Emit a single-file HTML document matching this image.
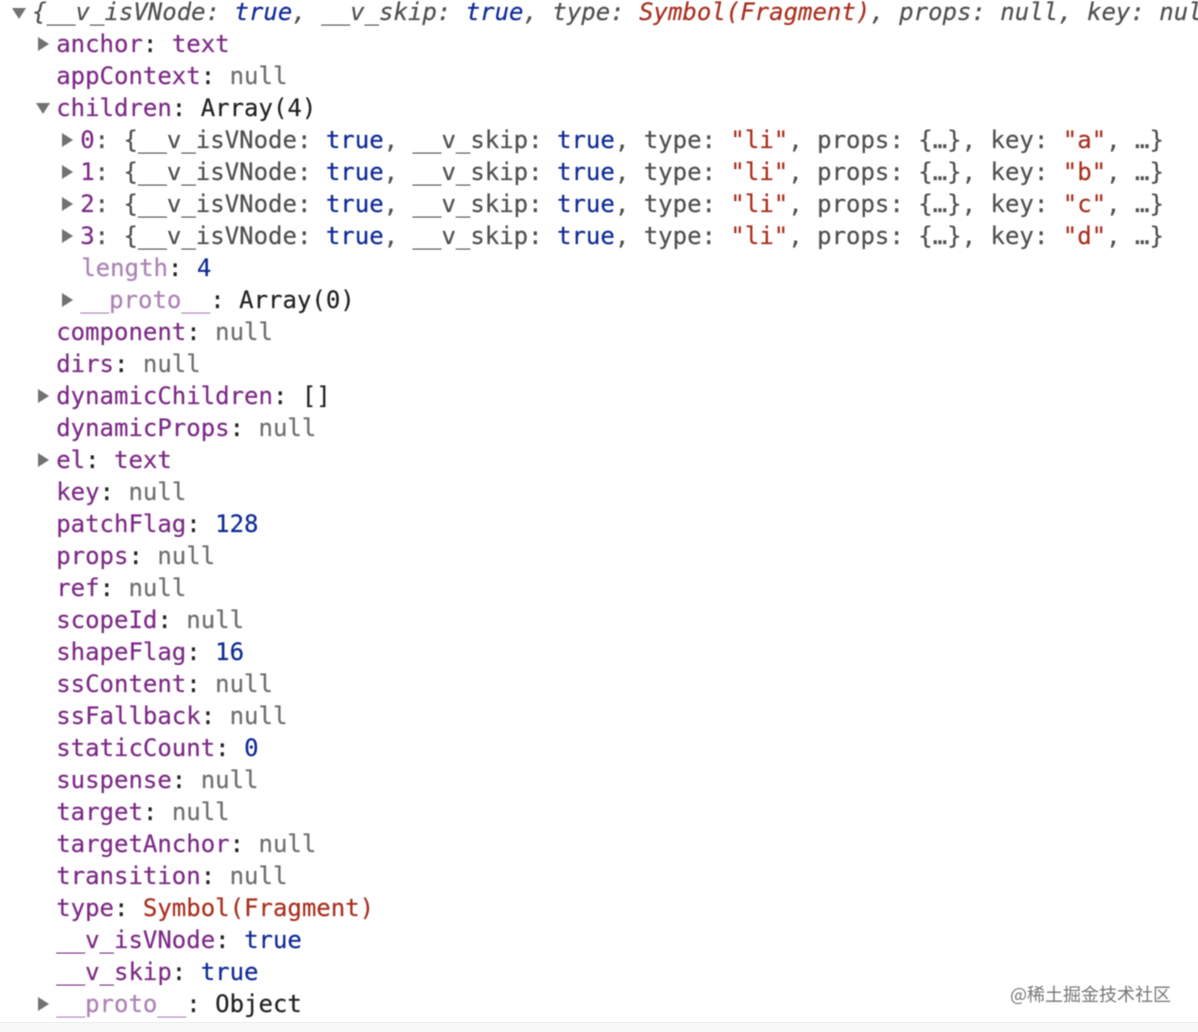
<!DOCTYPE html>
<html>
<head>
<meta charset="utf-8">
<style>
html,body{margin:0;padding:0;background:#fff;}
body{width:1198px;height:1032px;position:relative;overflow:hidden;}
#c{position:absolute;left:0;top:0;width:1198px;height:1032px;filter:blur(0.45px);}
.l{position:absolute;white-space:pre;margin-left:-0.8px;font:24px/32px "DejaVu Sans Mono","Liberation Mono",monospace;color:#222;height:32px;-webkit-text-stroke:0.2px;}
.n{color:#7c2a85}.f{color:#ab82b4}.g{color:#6f6f6f}.b{color:#0f2a96}.r{color:#a8301f}.k{color:#4f4f4f}.d{color:#222}
.i{font-style:italic}
.t{position:absolute;width:0;height:0;}
.ri{border-left:11px solid #727272;border-top:7px solid transparent;border-bottom:7px solid transparent;}
.do{border-top:11px solid #727272;border-left:7px solid transparent;border-right:7px solid transparent;}
#w{position:absolute;left:1010px;top:983px;font:18px/22px "Noto Sans CJK SC","WenQuanYi Zen Hei","Liberation Sans",sans-serif;color:#777;white-space:pre;}
#bar{position:absolute;left:0;top:1022px;width:1198px;height:10px;background:#f8f8f8;border-top:1px solid #eeeeee;box-sizing:border-box;}
</style>
</head>
<body>
<div id="c">
<div class="t do" style="left:12px;top:8px"></div>
<div class="l i k" style="left:33px;top:-4px">{__v_isVNode: <span class="b">true</span>, __v_skip: <span class="b">true</span>, type: <span class="r">Symbol(Fragment)</span>, props: null, key: null</div>

<div class="t ri" style="left:38px;top:37px"></div>
<div class="l" style="left:57px;top:28px"><span class="n">anchor</span>: <span class="n">text</span></div>
<div class="l" style="left:57px;top:60px"><span class="n">appContext</span>: <span class="g">null</span></div>
<div class="t do" style="left:36px;top:103px"></div>
<div class="l" style="left:57px;top:92px"><span class="n">children</span>: Array(4)</div>

<div class="t ri" style="left:62px;top:133px"></div>
<div class="l k" style="left:81px;top:124px"><span class="n">0</span>: {__v_isVNode: <span class="b">true</span>, __v_skip: <span class="b">true</span>, type: <span class="r">"li"</span>, props: {…}, key: <span class="r">"a"</span>, …}</div>
<div class="t ri" style="left:62px;top:165px"></div>
<div class="l k" style="left:81px;top:156px"><span class="n">1</span>: {__v_isVNode: <span class="b">true</span>, __v_skip: <span class="b">true</span>, type: <span class="r">"li"</span>, props: {…}, key: <span class="r">"b"</span>, …}</div>
<div class="t ri" style="left:62px;top:197px"></div>
<div class="l k" style="left:81px;top:188px"><span class="n">2</span>: {__v_isVNode: <span class="b">true</span>, __v_skip: <span class="b">true</span>, type: <span class="r">"li"</span>, props: {…}, key: <span class="r">"c"</span>, …}</div>
<div class="t ri" style="left:62px;top:229px"></div>
<div class="l k" style="left:81px;top:220px"><span class="n">3</span>: {__v_isVNode: <span class="b">true</span>, __v_skip: <span class="b">true</span>, type: <span class="r">"li"</span>, props: {…}, key: <span class="r">"d"</span>, …}</div>
<div class="l" style="left:82px;top:252px"><span class="f">length</span>: <span class="b">4</span></div>
<div class="t ri" style="left:62px;top:293px"></div>
<div class="l" style="left:81px;top:284px"><span class="f">__proto__</span>: Array(0)</div>

<div class="l" style="left:57px;top:316px"><span class="n">component</span>: <span class="g">null</span></div>
<div class="l" style="left:57px;top:348px"><span class="n">dirs</span>: <span class="g">null</span></div>
<div class="t ri" style="left:38px;top:389px"></div>
<div class="l" style="left:57px;top:380px"><span class="n">dynamicChildren</span>: []</div>
<div class="l" style="left:57px;top:412px"><span class="n">dynamicProps</span>: <span class="g">null</span></div>
<div class="t ri" style="left:38px;top:453px"></div>
<div class="l" style="left:57px;top:444px"><span class="n">el</span>: <span class="n">text</span></div>
<div class="l" style="left:57px;top:476px"><span class="n">key</span>: <span class="g">null</span></div>
<div class="l" style="left:57px;top:508px"><span class="n">patchFlag</span>: <span class="b">128</span></div>
<div class="l" style="left:57px;top:540px"><span class="n">props</span>: <span class="g">null</span></div>
<div class="l" style="left:57px;top:572px"><span class="n">ref</span>: <span class="g">null</span></div>
<div class="l" style="left:57px;top:604px"><span class="n">scopeId</span>: <span class="g">null</span></div>
<div class="l" style="left:57px;top:636px"><span class="n">shapeFlag</span>: <span class="b">16</span></div>
<div class="l" style="left:57px;top:668px"><span class="n">ssContent</span>: <span class="g">null</span></div>
<div class="l" style="left:57px;top:700px"><span class="n">ssFallback</span>: <span class="g">null</span></div>
<div class="l" style="left:57px;top:732px"><span class="n">staticCount</span>: <span class="b">0</span></div>
<div class="l" style="left:57px;top:764px"><span class="n">suspense</span>: <span class="g">null</span></div>
<div class="l" style="left:57px;top:796px"><span class="n">target</span>: <span class="g">null</span></div>
<div class="l" style="left:57px;top:828px"><span class="n">targetAnchor</span>: <span class="g">null</span></div>
<div class="l" style="left:57px;top:860px"><span class="n">transition</span>: <span class="g">null</span></div>
<div class="l" style="left:57px;top:892px"><span class="n">type</span>: <span class="r">Symbol(Fragment)</span></div>
<div class="l" style="left:57px;top:924px"><span class="n">__v_isVNode</span>: <span class="b">true</span></div>
<div class="l" style="left:57px;top:956px"><span class="n">__v_skip</span>: <span class="b">true</span></div>
<div class="t ri" style="left:38px;top:997px"></div>
<div class="l" style="left:57px;top:988px"><span class="f">__proto__</span>: Object</div>
<div id="w">@稀土掘金技术社区</div>
</div>
<div id="bar"></div>
</body>
</html>
